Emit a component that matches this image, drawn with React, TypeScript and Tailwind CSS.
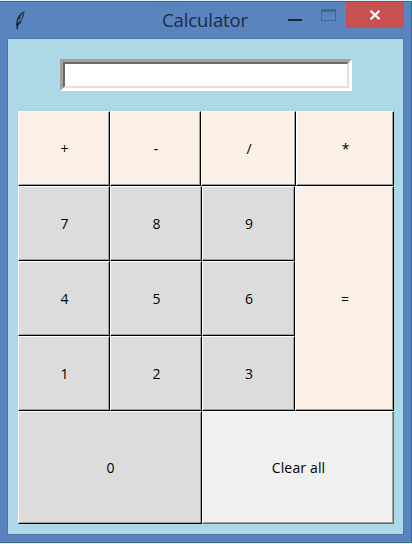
import React from "react";

const tones = {
  linen: "bg-[#faf0e6]",
  gray: "bg-[#dcdcdc]",
};

type KeyProps = { label: string; className?: string; tone?: keyof typeof tones };

function Key({ label, className = "", tone = "gray" }: KeyProps) {
  return (
    <button
      className={`flex border border-t-white border-l-white border-r-black border-b-black ${className}`}
    >
      <span
        className={`flex h-full w-full items-center justify-center border-r border-b border-[#a0a0a0] pt-[2px] pl-[2px] ${tones[tone]}`}
      >
        {label}
      </span>
    </button>
  );
}

function Feather() {
  return (
    <svg width="12" height="22" viewBox="0 0 12 22" className="block">
      <path d="M10.6 2.4 C7.2 3 4.2 6.2 2.9 10.2 L2 15 L3 17.8 L4.4 16.2 C6.6 15 8 12.4 8 10.6 L9.2 8.4 C10 6.4 10 4.2 10.6 2.4Z" fill="#1b2f49" />
      <path d="M9 4.6 L6.2 8.6 M5.4 10 L4 13.4 M8.2 7.4 L6 12.2" stroke="#7894b5" strokeWidth="1" fill="none" />
      <path d="M3.4 15 L3.2 20.2" stroke="#0c1520" strokeWidth="1.3" />
    </svg>
  );
}

function TitleBar() {
  return (
    <header className="flex h-9 shrink-0 items-start">
      <div className="w-[162px] pt-[7px] pl-[14px]">
        <Feather />
      </div>
      <h1 className="w-[124px] pt-1 text-[18.5px] leading-7 tracking-[-0.1px] text-[#1c2b45]">Calculator</h1>
      <div className="w-[35px] pt-[17px] pl-[2px]">
        <div className="h-[2px] w-[14px] bg-[#1c2738]" />
      </div>
      <div className="w-[25px] pt-[7px]">
        <div className="h-3 w-[15px] border border-t-[3px] border-[#45658f]" />
      </div>
      <div className="flex h-[26px] w-[58px] items-center justify-center bg-[#c75050]">
        <svg width="12" height="10" viewBox="0 0 12 10">
          <path d="M1.5 .8 L10.5 9.2 M10.5 .8 L1.5 9.2" stroke="white" strokeWidth="2.2" />
        </svg>
      </div>
    </header>
  );
}

export default function App() {
  return (
    <div className="h-[544px] w-[412px] overflow-hidden border-t border-b border-[#d9effb] font-['Open_Sans','Noto_Sans',sans-serif]">
      <div className="flex h-[542px] flex-col border-t border-r border-b border-[#46648c] bg-[#5a84bd]">
        <TitleBar />
        <main className="mr-[7px] ml-[7px] h-[497px] border border-[#4d77a5] bg-[#add8e6]">
          <div className="mt-5 ml-[52px] h-8 w-[292px] border-[3px] border-t-[#a0a0a0] border-r-white border-b-white border-l-[#a0a0a0]">
            <input
              aria-label="Expression"
              className="block h-full w-full border-2 border-t-[#696969] border-r-[#e3e3e3] border-b-[#e3e3e3] border-l-[#696969] bg-white outline-none"
            />
          </div>
          <div className="mt-5 ml-[10px] w-[376px] text-[14px] leading-5 text-black">
            <div className="grid h-[75px] grid-cols-[92px_91px_95px_98px]">
              <Key label="+" tone="linen" />
              <Key label="-" tone="linen" />
              <Key label="/" tone="linen" />
              <Key label="*" tone="linen" />
            </div>
            <div className="grid h-[338px] grid-cols-[92px_92px_93px_99px] grid-rows-[75px_75px_75px_113px]">
              <Key label="7" />
              <Key label="8" />
              <Key label="9" />
              <Key label="=" tone="linen" className="row-span-3" />
              <Key label="4" />
              <Key label="5" />
              <Key label="6" />
              <Key label="1" />
              <Key label="2" />
              <Key label="3" />
              <Key label="0" className="col-span-2" />
              <button className="col-span-2 flex border border-t-white border-l-white border-r-[#696969] border-b-[#696969]">
                <span className="flex h-full w-full items-center justify-center border-r border-b border-[#a0a0a0] bg-[#f0f0f0] pt-[2px] pl-[2px] tracking-[0.15px]">
                  Clear all
                </span>
              </button>
            </div>
          </div>
        </main>
      </div>
    </div>
  );
}
